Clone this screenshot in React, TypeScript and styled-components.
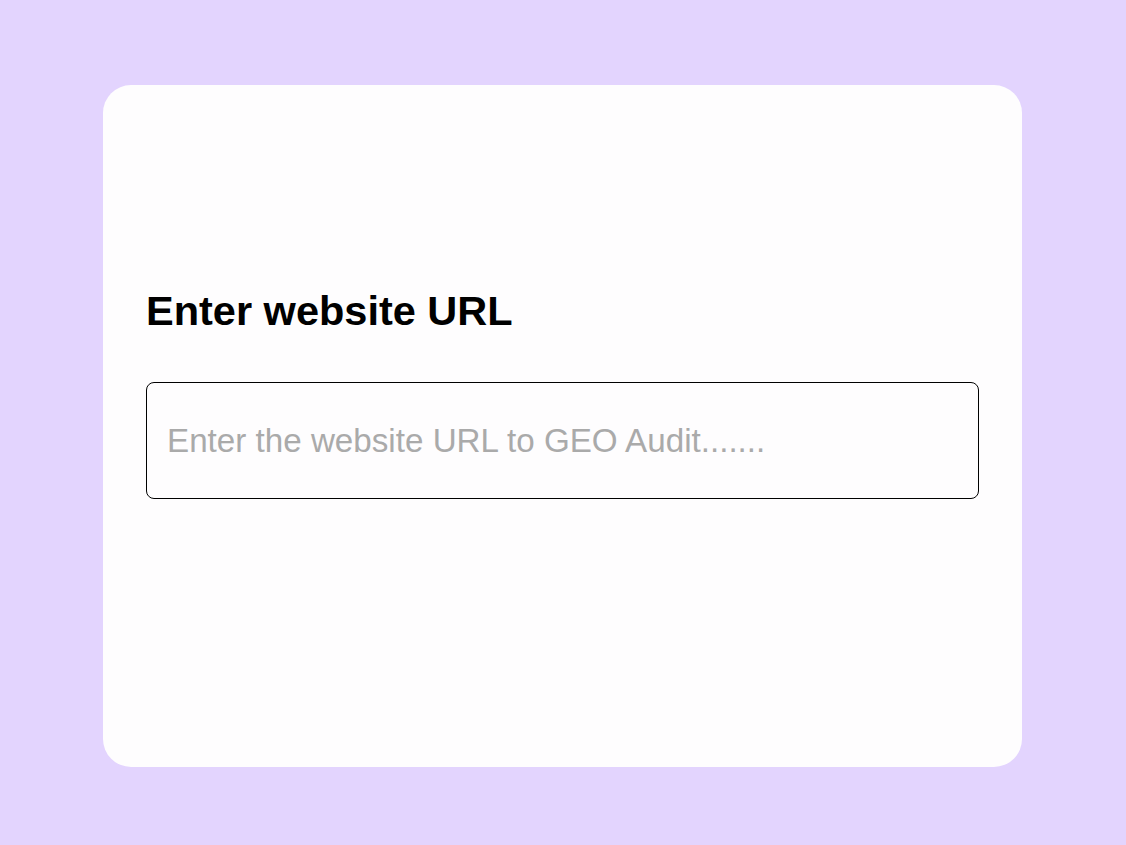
import styled, { createGlobalStyle } from 'styled-components';

const GlobalStyle = createGlobalStyle`
  html, body {
    margin: 0;
    padding: 0;
    background: #e3d4fe;
  }
  * {
    box-sizing: border-box;
  }
`;

const Page = styled.div`
  width: 100vw;
  min-height: 100vh;
  background: #e3d4fe;
  padding: 85px 0 0 103px;
  font-family: "Liberation Sans", Arial, sans-serif;
`;

const Card = styled.div`
  width: 919px;
  height: 682px;
  background: #fefdfe;
  border-radius: 28px;
  padding: 202px 43px 0;
  display: flex;
  flex-direction: column;
  gap: 48px;
`;

const Title = styled.h1`
  margin: 0;
  font-size: 41.5px;
  font-weight: 700;
  color: #000;
  line-height: 47px;
`;

const UrlInput = styled.input`
  width: 100%;
  height: 117px;
  border: 1px solid #000;
  border-radius: 8px;
  padding: 0 20px;
  font-family: "Liberation Sans", Arial, sans-serif;
  font-size: 33.2px;
  color: #222;
  background: transparent;
  outline: none;

  &::placeholder {
    color: #aaaaaa;
  }
`;

export default function App() {
  return (
    <>
      <GlobalStyle />
      <Page>
        <Card>
          <Title>Enter website URL</Title>
          <UrlInput type="text" placeholder="Enter the website URL to GEO Audit......." />
        </Card>
      </Page>
    </>
  );
}
